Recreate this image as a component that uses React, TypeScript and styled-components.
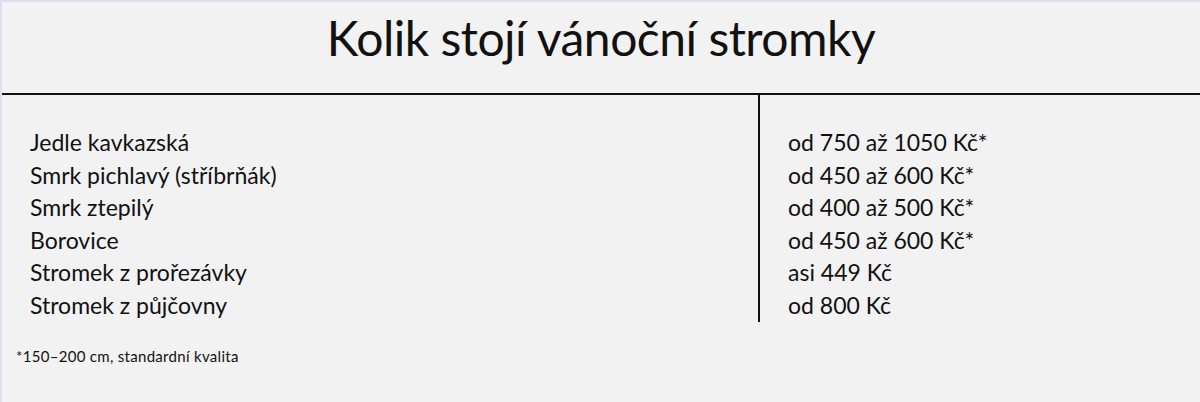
import React from "react";
import styled, { createGlobalStyle } from "styled-components";

const Global = createGlobalStyle`
  html, body { margin: 0; padding: 0; background: #f2f2f2; }
  body { font-family: Lato, "Open Sans", sans-serif; color: #111; }
`;

const Page = styled.div`
  width: 1200px;
  height: 402px;
  box-sizing: border-box;
  background: #f2f2f2;
  border-top: 2px solid #dcdff0;
  border-left: 2px solid #dcdff0;
  display: flex;
  flex-direction: column;
`;

const Header = styled.header`
  height: 93px;
  box-sizing: border-box;
  border-bottom: 2px solid #111;
  display: flex;
  justify-content: center;
  padding-top: 7px;
`;

const Title = styled.h1`
  margin: 0;
  font-weight: 400;
  font-size: 48px;
  line-height: 58px;
  letter-spacing: -0.5px;
`;

const Table = styled.div`
  display: grid;
  grid-template-columns: 758px 1fr;
`;

const Column = styled.div<{ $divider?: boolean; $inset: number }>`
  display: flex;
  flex-direction: column;
  padding: 31px 0 1px ${(p) => p.$inset}px;
  border-right: ${(p) => (p.$divider ? "2px solid #111" : "none")};
`;

const Cell = styled.div`
  font-size: 23px;
  line-height: 32.5px;
  white-space: nowrap;
`;

const Note = styled.p`
  margin: 26px 0 0 14px;
  font-size: 15px;
  line-height: 16px;
  letter-spacing: 0.3px;
`;

const rows: [string, string][] = [
  ["Jedle kavkazská", "od 750 až 1050 Kč*"],
  ["Smrk pichlavý (stříbrňák)", "od 450 až 600 Kč*"],
  ["Smrk ztepilý", "od 400 až 500 Kč*"],
  ["Borovice", "od 450 až 600 Kč*"],
  ["Stromek z prořezávky", "asi 449 Kč"],
  ["Stromek z půjčovny", "od 800 Kč"],
];

export default function App() {
  return (
    <>
      <Global />
      <Page>
        <Header>
          <Title>Kolik stojí vánoční stromky</Title>
        </Header>
        <Table>
          <Column $divider $inset={28}>
            {rows.map(([name]) => (
              <Cell key={name}>{name}</Cell>
            ))}
          </Column>
          <Column $inset={28}>
            {rows.map(([name, price]) => (
              <Cell key={name}>{price}</Cell>
            ))}
          </Column>
        </Table>
        <Note>*150–200 cm, standardní kvalita</Note>
      </Page>
    </>
  );
}
